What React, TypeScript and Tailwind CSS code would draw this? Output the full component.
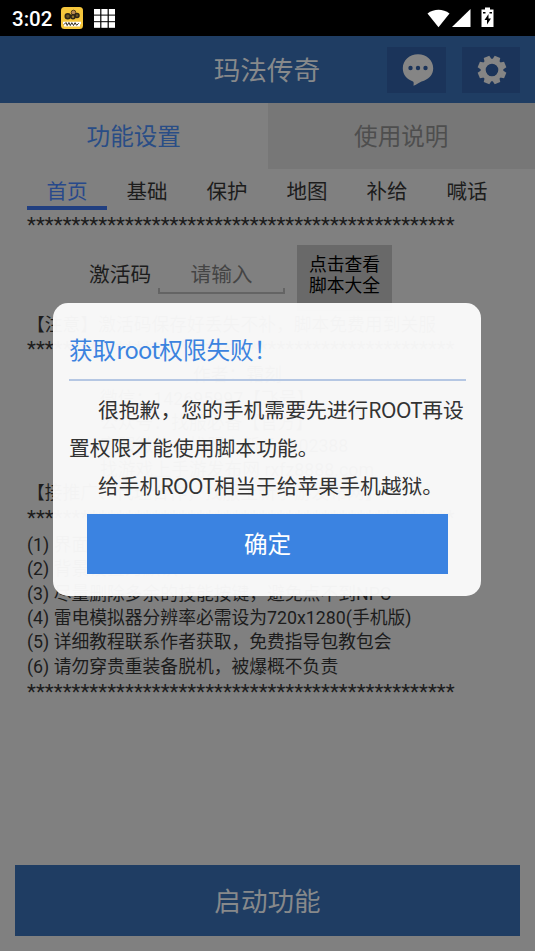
const stars = '*'.repeat(48);

const subTabs = ['首页', '基础', '保护', '地图', '补给', '喊话'];

const contacts = [
  '作者：霜刻',
  '微信：142695997【飞号】',
  '公众号：找服必备【官方】',
  '客服微信：找服上新/frx202388',
  '找游戏上手游发布网 rxfz8888.com',
];

const tips = [
  '(1) 界面设置好再启动脚本',
  '(2) 背景设置为默认',
  '(3) 尽量删除多余的技能按键，避免点不到NPC',
  '(4) 雷电模拟器分辨率必需设为720x1280(手机版)',
  '(5) 详细教程联系作者获取，免费指导包教包会',
  '(6) 请勿穿贵重装备脱机，被爆概不负责',
];

const Stars = () => (
  <p className="h-[24px] whitespace-nowrap text-[20.7px] leading-[24px]">{stars}</p>
);

const StatusBar = () => (
  <div className="flex h-9 shrink-0 items-center bg-black pl-3 pr-[40px] text-white">
    <span className="w-[49px] pt-0.5 text-[20.5px] font-medium leading-none">3:02</span>
    <svg className="h-[22px] w-[22px]" viewBox="0 0 22 22">
      <rect width="22" height="22" rx="3.5" fill="#f5c63c" />
      <circle cx="12.5" cy="5.5" r="2.3" fill="#b98a55" stroke="#3a2d14" strokeWidth=".8" />
      <circle cx="6.8" cy="9.3" r="2.5" fill="#6b5520" stroke="#2d2618" strokeWidth="1.6" />
      <circle cx="12" cy="9.8" r="2" fill="#94772c" stroke="#2d2618" strokeWidth="1.5" />
      <circle cx="16" cy="8.6" r="2" fill="#6b5520" stroke="#2d2618" strokeWidth="1.5" />
      <path d="M2 16h18M3 18.3h16" stroke="#fff" strokeWidth="2.4" />
      <path d="M3 17.5l2-2 1.200 3 1.700-3 1.400 3 1.500-2.800 1.700 2.800 1.600-2.800 1.500 2.600 2-2" stroke="#2d2618" strokeWidth="1" fill="none" />
    </svg>
    <svg className="ml-[11px] h-[19px] w-[21px]" viewBox="0 0 21 19" fill="#fff">
      {[0, 6.6, 13.2].map((y) =>
        [0, 7.4, 14.8].map((x) => <rect key={`${x}-${y}`} x={x} y={y} width="6.2" height="5.6" />)
      )}
    </svg>
    <svg className="ml-auto h-[22px] w-[68px]" viewBox="0 0 68 22" fill="#fff">
      <path d="M0.5 6.5C7 1.500 16 1.500 22.5 6.5L11.5 20.2z" />
      <path d="M43.500 2v18H25z" />
      <path d="M58 .5h5v2h3.500v17.500H54.500v-17.500H58z" />
      <path d="M61.500 7l-4 6h2.500v4.500l4-6h-2.500z" fill="#000" />
      <path d="M56 5h2.500v1.600H56zM62.500 5H65v1.600h-2.500z" fill="#000" />
    </svg>
  </div>
);

const Header = () => (
  <header className="flex h-[67px] shrink-0 items-center justify-end bg-[#1f3d63] pr-[15px]">
    <h1 className="mr-[67px] pt-[4px] text-[26.6px] leading-none text-[#87898b]">玛法传奇</h1>
    <div className="mr-4 flex h-[46px] w-[59px] items-center justify-center bg-[#1b345a]">
      <svg className="ml-0.5 h-8 w-8" viewBox="0 0 32 32">
        <path d="M16 .3C7.600.3.8 6.300.8 14.200c0 7 4.500 11.200 10.200 13.200.7.300.9 1.700.5 4.300 3.500-1.300 5.500-3 8-4.200 7-2 11.700-6.500 11.700-13.300C31.200 6.300 24.400.3 16 .3z" fill="#858585" />
        <circle cx="8.500" cy="14" r="2.200" fill="#1b345a" />
        <circle cx="16" cy="14" r="2.200" fill="#1b345a" />
        <circle cx="23.500" cy="14" r="2.200" fill="#1b345a" />
      </svg>
    </div>
    <div className="flex h-[46px] w-[58px] items-center justify-center bg-[#1b345a]">
      <svg className="ml-[2px] h-[30px] w-[30px]" viewBox="0 0 30 30">
        <g fill="#858585">
          {[0, 45, 90, 135, 180, 225, 270, 315].map((a) => (
            <path key={a} d="M11 6l1-5.300h6L19 6z" transform={`rotate(${a + 22.5} 15 15)`} />
          ))}
        </g>
        <circle cx="15" cy="15" r="8.800" fill="none" stroke="#858585" strokeWidth="5" />
      </svg>
    </div>
  </header>
);

const Dialog = () => (
  <div className="absolute left-[53px] top-[303px] flex h-[293px] w-[428px] flex-col rounded-[15px] bg-[#fbfbfb]/[0.97] pl-4 pr-[15px] font-['Noto_Sans_CJK_SC',sans-serif]">
    <h2 className="h-[78px] whitespace-nowrap border-b-2 border-[#b5c7e3] pt-[28px] text-[23.6px] leading-[36px] text-[#3b83df]">
      获取<span className="tracking-[-0.7px]">root</span>权限失败！
    </h2>
    <div className="whitespace-nowrap pt-[10px] text-[20.8px] leading-[37.8px] text-[#333]">
      <p className="pl-[29px]">很抱歉，您的手机需要先进行<span className="tracking-[-0.5px]">ROOT</span>再设</p>
      <p>置权限才能使用脚本功能。</p>
      <p className="pl-[29px]">给手机<span className="tracking-[-0.5px]">ROOT</span>相当于给苹果手机越狱。</p>
    </div>
    <button className="absolute left-[34px] top-[211px] h-[60px] w-[361px] bg-[#3b83e1] text-[23.6px] text-white">确定</button>
  </div>
);

export default function App() {
  return (
    <div className="relative flex h-[951px] w-[535px] flex-col overflow-hidden bg-[#808080] font-[Roboto,'Noto_Sans_CJK_SC',sans-serif] text-[#1c1c1c]">
      <StatusBar />
      <Header />
      <div className="grid h-[66px] shrink-0 grid-cols-2 text-center text-[23.6px] leading-[64px]">
        <div className="pt-[2px] text-[#294d86]">功能设置</div>
        <div className="bg-[#777] pt-[2px] text-[#4e4e4e]">使用说明</div>
      </div>
      <nav className="flex h-[41px] shrink-0 pl-[27px] text-[20.5px] leading-[47px]">
        {subTabs.map((tab, i) => (
          <div key={tab} className={i === 0 ? 'w-20 border-b-4 border-[#213f80] text-center text-[#28498b]' : 'w-20 text-center'}>
            {tab}
          </div>
        ))}
      </nav>
      <div className="pl-[27px] pt-[3px]"><Stars /></div>
      <div className="flex h-[76px] shrink-0 pl-[89px] pt-[8px]">
        <span className="w-[69px] pt-[15px] text-[20.7px] leading-[30px]">激活码</span>
        <div className="mt-[12px] flex h-[37px] w-[127px] flex-col justify-between text-center text-[20.7px] leading-[36px] text-[#444]">
          请输入
          <div className="-mt-2 h-[6px] shrink-0 border-x-2 border-b-2 border-[#646464]" />
        </div>
        <button className="ml-3 h-[66px] w-[95px] bg-[#696969] pb-1.5 text-[17.8px] leading-[21px] text-black">
          点击查看<br />脚本大全
        </button>
      </div>
      <div className="whitespace-nowrap pl-[27px] text-[17.8px] leading-[24.4px]">
        <p>【注意】激活码保存好丢失不补，脚本免费用到关服</p>
        <Stars />
        <div className="flex h-[120px] flex-col pl-[73px] pt-0.5 leading-[23.6px]">
          {contacts.map((line, i) => (
            <p key={line} className={i === 0 ? 'pl-[93px]' : ''}>{line}</p>
          ))}
        </div>
        <p>【接推广、代理合作，找服上新手游发布网】</p>
        <div className="h-[27px]"><Stars /></div>
        {tips.map((tip) => <p key={tip}>{tip}</p>)}
        <div className="pt-px"><Stars /></div>
      </div>
      <button className="mx-[15px] mb-[15px] mt-auto h-[71px] shrink-0 bg-[#1f3d63] pt-[3px] text-[26.6px] text-[#87898b]">启动功能</button>
      <Dialog />
    </div>
  );
}
